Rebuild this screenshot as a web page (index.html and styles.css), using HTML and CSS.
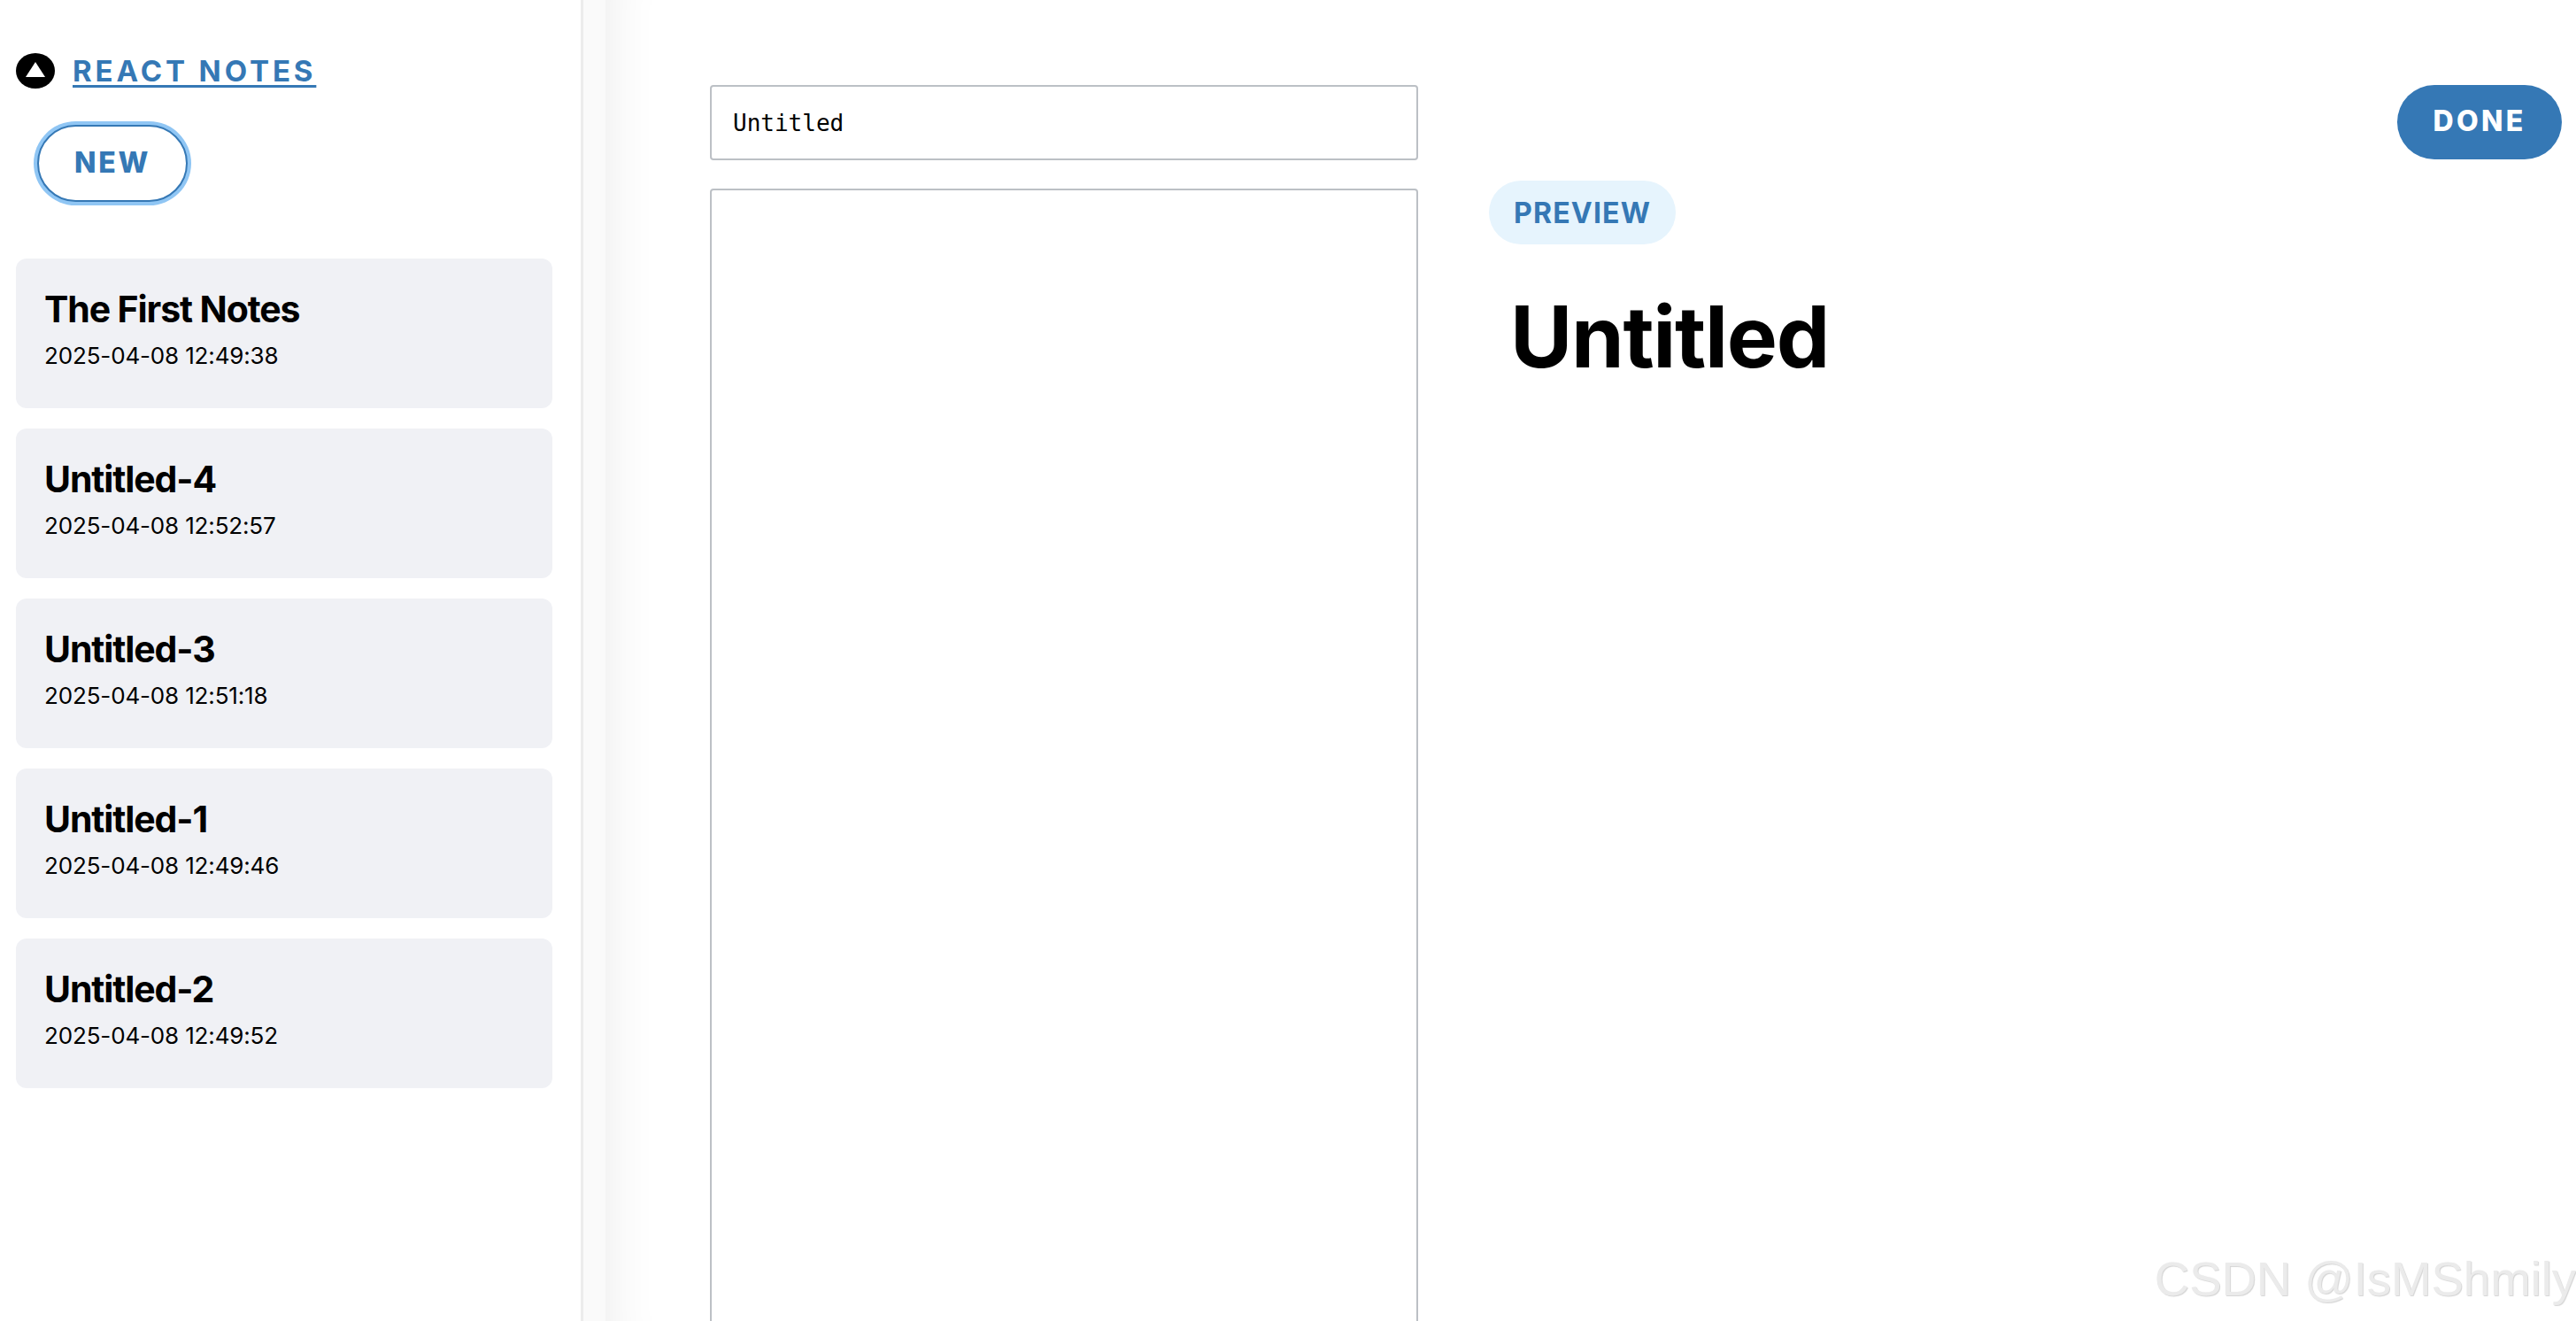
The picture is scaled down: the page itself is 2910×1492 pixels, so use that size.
FILE: index.html
```html
<!DOCTYPE html>
<html lang="en">
<head>
<meta charset="utf-8">
<title>React Notes</title>
<link rel="stylesheet" href="styles.css">
</head>
<body>
<div class="app">
  <aside class="sidebar">
    <header class="brand">
      <svg class="logo" viewBox="0 0 44 40" aria-hidden="true">
        <ellipse cx="22" cy="20" rx="22" ry="20" fill="#000"/>
        <polygon points="22,10 33,27 11,27" fill="#fff"/>
      </svg>
      <a class="brand-link" href="#">React Notes</a>
    </header>
    <div class="new-row"><button class="btn-new">New</button></div>
    <ul class="notes">
      <li class="note"><h3>The First Notes</h3><small>2025-04-08 12:49:38</small></li>
      <li class="note"><h3>Untitled-4</h3><small>2025-04-08 12:52:57</small></li>
      <li class="note"><h3>Untitled-3</h3><small>2025-04-08 12:51:18</small></li>
      <li class="note"><h3>Untitled-1</h3><small>2025-04-08 12:49:46</small></li>
      <li class="note"><h3>Untitled-2</h3><small>2025-04-08 12:49:52</small></li>
    </ul>
  </aside>
  <div class="gutter"></div>
  <main class="editor">
    <form class="form">
      <input class="title-input" type="text" value="Untitled">
      <textarea class="body-input"></textarea>
    </form>
    <section class="preview">
      <div class="menu"><button class="btn-done" type="button">Done</button></div>
      <div class="label">Preview</div>
      <h1 class="note-title">Untitled</h1>
    </section>
  </main>
</div>
<div class="watermark">CSDN @IsMShmily</div>
</body>
</html>
```

FILE: styles.css
```css
* { box-sizing: border-box; }
html, body { margin: 0; height: 100%; overflow: hidden; background: #fff; }
body { font-family: Inter, "Liberation Sans", sans-serif; color: #000; }

.app { display: flex; height: 1492px; overflow: hidden; }

.sidebar {
  width: 659px;
  flex: none;
  border-right: 3px solid #ececec;
  padding: 60px 32px 0 18px;
}
.brand { display: flex; align-items: center; gap: 20px; height: 40px; }
.logo { width: 44px; height: 40px; flex: none; }
.brand-link {
  color: #3578b5;
  font-size: 33px;
  font-weight: 700;
  letter-spacing: 3.9px;
  line-height: 40px;
  text-transform: uppercase;
  text-decoration: underline;
  text-decoration-thickness: 3px;
  text-underline-offset: 4px;
}
.new-row { padding: 41px 0 0 24px; }
.btn-new {
  display: block;
  width: 170px;
  height: 87px;
  border: 2px solid #3578b5;
  border-radius: 44px;
  box-shadow: 0 0 0 4px #90c6f4;
  background: #fff;
  color: #3578b5;
  font: 800 32px Inter, sans-serif;
  letter-spacing: 2.7px;
  text-transform: uppercase;
  padding: 0 0 3px;
}
.notes { list-style: none; margin: 63.5px 0 0; padding: 0; display: flex; flex-direction: column; gap: 23px; }
.note {
  height: 169px;
  background: #f0f1f5;
  border-radius: 12px;
  padding: 33px 32px;
}
.note h3 { margin: 0; font-size: 41px; line-height: 48px; font-weight: 700; letter-spacing: -1.1px; }
.note small { display: block; margin-top: 13px; font-size: 26px; line-height: 32px; letter-spacing: -0.15px; }

.gutter { width: 25px; flex: none; background: #fafafa; }

.editor {
  flex: 1;
  position: relative;
  display: flex;
  gap: 80px;
  padding: 96px 16px 0 118px;
  background: #fff;
  box-shadow: inset 60px 0 60px -60px rgba(0, 0, 0, .09);
}
.form { width: 800px; flex: none; display: flex; flex-direction: column; gap: 32px; }
.title-input, .body-input {
  display: block;
  flex: none;
  width: 100%;
  border: 2px solid #bcc0c5;
  border-radius: 4px;
  background: transparent;
  font-family: "DejaVu Sans Mono", monospace;
  font-size: 26px;
  color: #000;
  outline: none;
}
.title-input { height: 85px; padding: 0 24px; }
.body-input { height: 1400px; resize: none; }

.preview { flex: 1; min-width: 0; position: relative; padding-top: 108px; }
.menu { position: absolute; top: 0; right: 0; }
.btn-done {
  display: block;
  width: 186px;
  height: 84px;
  border: 0;
  border-radius: 42px;
  background: #3578b5;
  color: #fff;
  font: 800 32px Inter, sans-serif;
  letter-spacing: 3.3px;
  text-transform: uppercase;
  padding: 0 0 3px;
}
.label {
  display: inline-block;
  height: 72px;
  line-height: 74px;
  padding: 0 28px;
  border-radius: 36px;
  background: #e6f4fd;
  color: #3578b5;
  font-size: 32px;
  font-weight: 700;
  letter-spacing: 1.2px;
  text-transform: uppercase;
}
.note-title { margin: 44px 0 0 24px; font-size: 96px; line-height: 120px; font-weight: 700; letter-spacing: -1.3px; }

.watermark {
  position: absolute;
  right: 0;
  bottom: 16px;
  font: 54.5px "Liberation Sans", Arial, sans-serif;
  color: #ebebeb;
  text-shadow: 1px 1px 1px #d4d4d4;
  white-space: nowrap;
}
```
